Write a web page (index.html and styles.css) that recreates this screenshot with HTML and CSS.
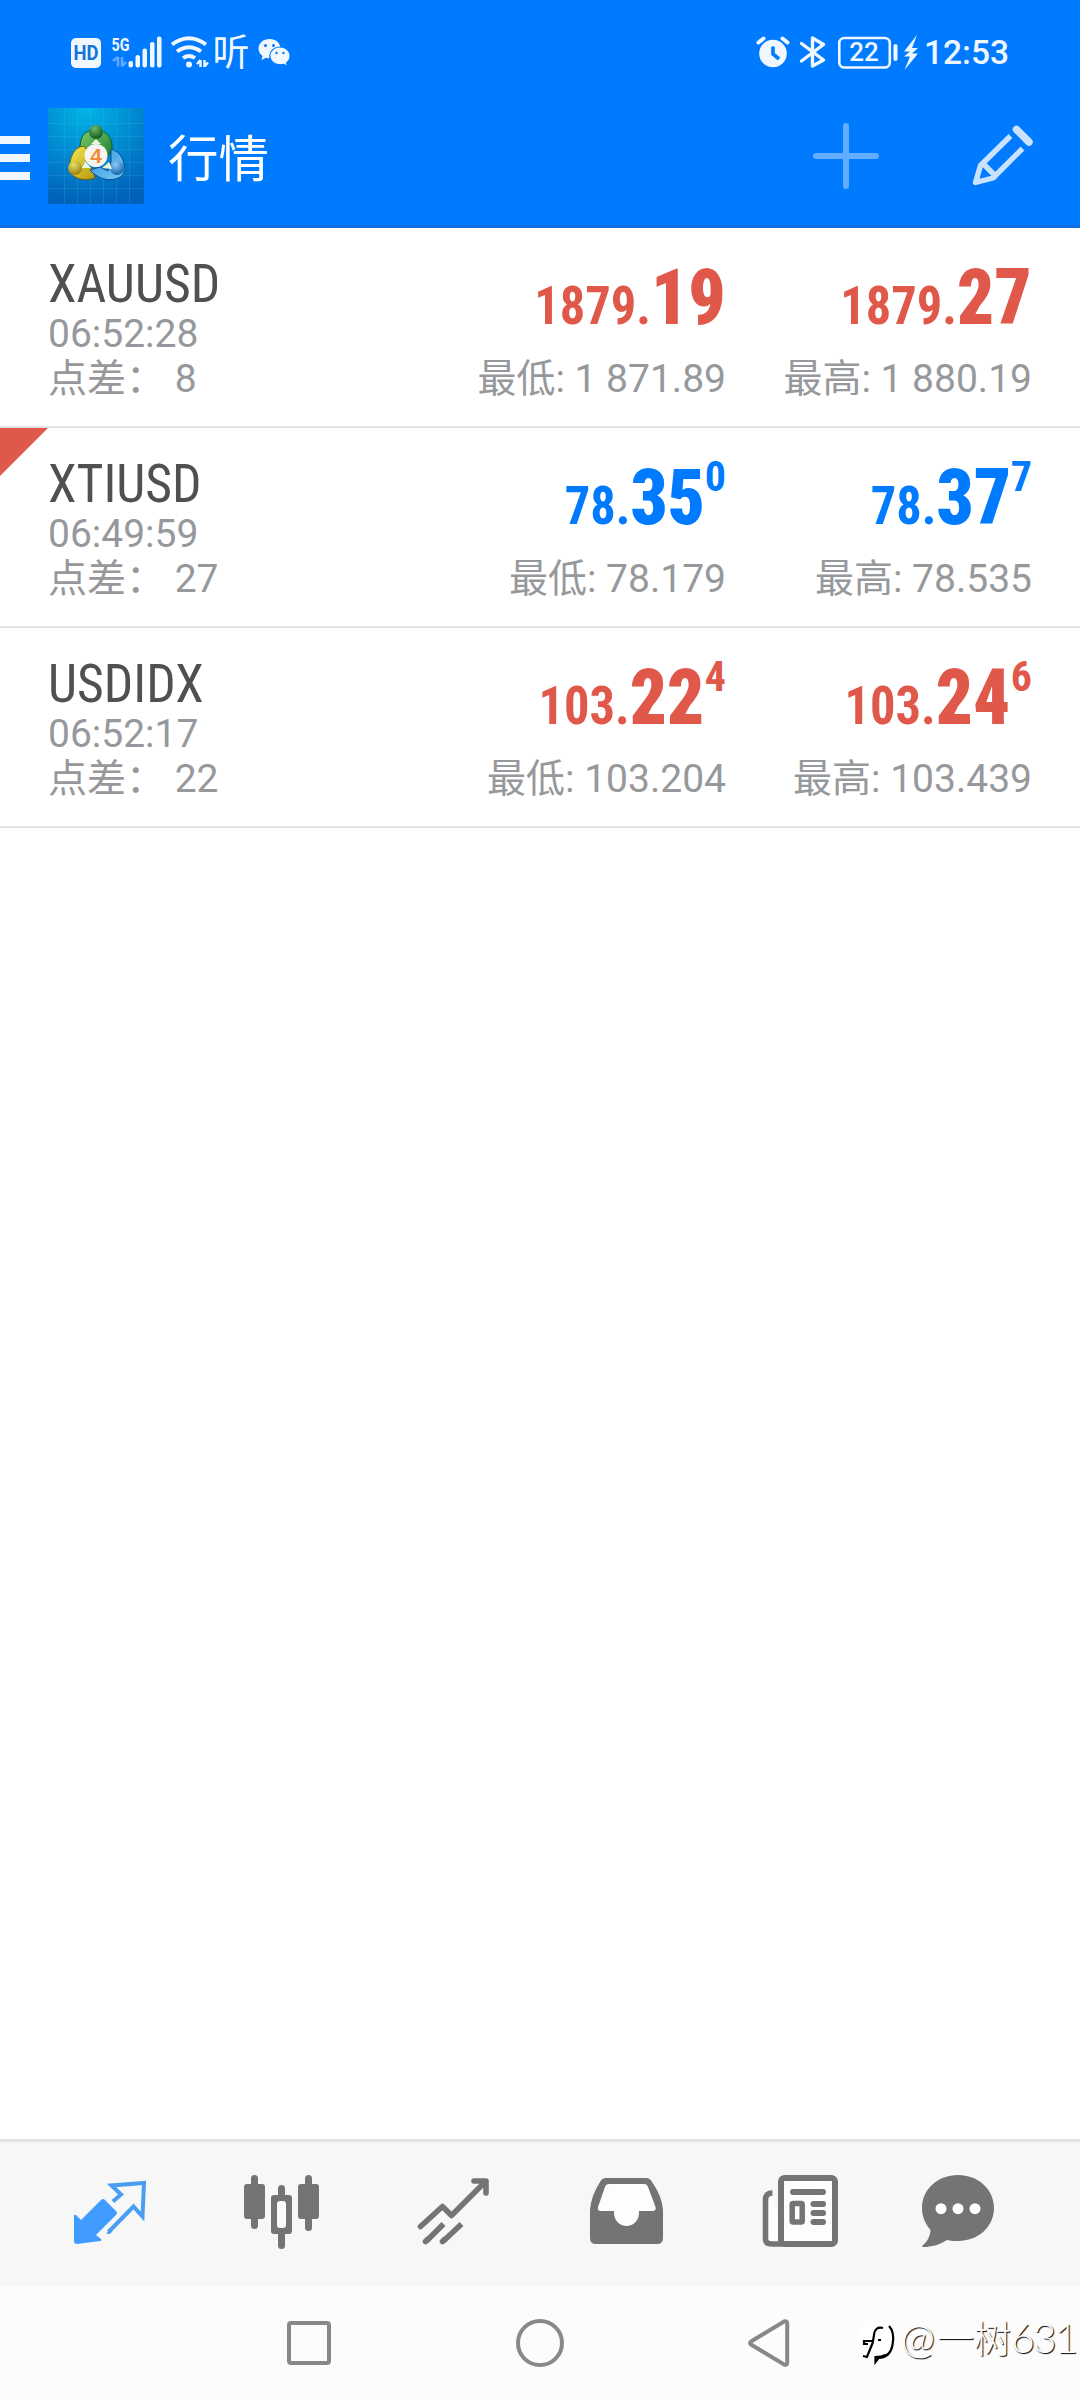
FILE: index.html
```html
<!DOCTYPE html>
<html lang="zh-CN">
<head>
<meta charset="utf-8">
<title>行情</title>
<link rel="stylesheet" href="styles.css">
</head>
<body>
<div class="screen">
  <header class="top">
    <div class="status">
      <div class="status-group">
        <svg width="36" height="76" viewBox="70 0 36 76"><rect x="71" y="38" width="30" height="30" rx="5" fill="#f0f7ff"/><text x="86" y="59.6" text-anchor="middle" textLength="25" lengthAdjust="spacingAndGlyphs" class="st-hd">HD</text></svg>
        <svg width="60" height="76" viewBox="106 0 60 76" fill="#f0f7ff"><text x="111.5" y="50.5" textLength="18" lengthAdjust="spacingAndGlyphs" class="st-5g">5G</text><path d="M118 57v9.500M113 61l5-4M122 57v9.500M122 66l4-4" stroke="#5fabff" stroke-width="2.500" fill="none"/><rect x="128.500" y="61" width="4.500" height="6.500" rx="2"/><rect x="135.500" y="55" width="4.500" height="12.500" rx="2"/><rect x="142.500" y="48.500" width="4.500" height="19" rx="2"/><rect x="150" y="42" width="4.500" height="25.500" rx="2"/><rect x="157" y="36.500" width="4.500" height="31" rx="2"/></svg>
        <svg width="46" height="76" viewBox="166 0 46 76" fill="none" stroke="#f0f7ff" stroke-width="3.800"><path d="M172 44.500Q189 32 206 44.500M177 51.500Q189 43 201 51.500M183 58Q189 54 195 58"/><circle cx="189" cy="64.500" r="3" fill="#f0f7ff" stroke="none"/><path d="M200.500 60v7M197 64l3.500-4M204.500 60v7M204.500 66.500l3.500-4" stroke-width="2.400"/></svg>
        <svg width="40" height="76" viewBox="212 0 40 76"><text x="212.500" y="65.500" class="st-cn">听</text></svg>
        <svg width="44" height="76" viewBox="252 0 44 76"><path fill="#f0f7ff" d="M269.500 39c-6.300 0-11 4.200-11 9.600 0 3.100 1.500 5.600 4 7.400l-1 4 4.500-2.300c1.300.4 2.400.5 3.600.5C276 58 280.500 54 280.500 48.600S276 39 269.500 39z"/><path fill="#f0f7ff" stroke="#007aff" stroke-width="1.200" d="M280 47c-5.800 0-10.200 4-10.200 8.800 0 5 4.400 9 10.200 9 1.200 0 2.200-.2 3.400-.5l4.100 2-1-3.400c2.200-1.700 3.600-4.200 3.600-7.100 0-4.800-4.400-8.800-10.100-8.800z"/><g fill="#007aff"><circle cx="265.500" cy="45.500" r="1.500"/><circle cx="273.500" cy="45.500" r="1.500"/><circle cx="276.500" cy="53" r="1.200"/><circle cx="283.500" cy="53" r="1.200"/></g></svg>
      </div>
      <div class="status-group">
        <svg width="43" height="76" viewBox="752 0 43 76"><circle cx="773" cy="53.500" r="13.800" fill="#f0f7ff"/><path d="M758.500 42.500l5-4M787.500 42.500l-5-4" stroke="#f0f7ff" stroke-width="4" stroke-linecap="round"/><path d="M773 46.500v7.500l6 5" fill="none" stroke="#007aff" stroke-width="3.600"/></svg>
        <svg width="39" height="76" viewBox="795 0 39 76"><path d="M801.500 43.500L823.500 60 812.500 66V38L823.500 44.500 801.500 61" fill="none" stroke="#f0f7ff" stroke-width="3.400" stroke-linejoin="round" stroke-linecap="round"/></svg>
        <svg width="66" height="76" viewBox="834 0 66 76"><rect x="839.300" y="38" width="50.500" height="29.500" rx="5" fill="none" stroke="#f0f7ff" stroke-width="2.600"/><rect x="893.500" y="44" width="4" height="17" rx="2" fill="#f0f7ff"/><text x="864" y="61" text-anchor="middle" class="st-bat">22</text></svg>
        <svg width="24" height="76" viewBox="900 0 24 76"><path d="M917 35l-13 16.500h6l-6 5h6L904.500 70 918 53.500h-6l6-5.500h-6z" fill="#f0f7ff"/></svg>
        <span class="clock">12:53</span>
      </div>
    </div>
    <div class="appbar">
      <svg width="48" height="150" viewBox="0 76 48 150" fill="#f0f7ff"><path d="M0 136h30v8H0zM0 154h30v8H0zM0 172h30v8H0z"/></svg>
      <svg class="logo" width="96" height="96" viewBox="0 0 96 96">
        <defs>
          <radialGradient id="bg" cx=".4" cy="0" r="1"><stop offset="0" stop-color="#00b4e6"/><stop offset=".5" stop-color="#008bd2"/><stop offset="1" stop-color="#0062b8"/></radialGradient>
          <linearGradient id="gr" x2="1" y2="1"><stop offset="0" stop-color="#7fce70"/><stop offset="1" stop-color="#157a28"/></linearGradient>
          <linearGradient id="ye" x2="1" y2="1"><stop offset="0" stop-color="#f3ed55"/><stop offset="1" stop-color="#b5950d"/></linearGradient>
          <linearGradient id="bl" x2="1" y2="1"><stop offset="0" stop-color="#2f94dc"/><stop offset="1" stop-color="#7cc8f5"/></linearGradient>
          <radialGradient id="hg" cx=".4" cy=".25" r=".8"><stop offset="0" stop-color="#6fb96a"/><stop offset="1" stop-color="#08551a"/></radialGradient>
          <radialGradient id="hy" cx=".4" cy=".25" r=".8"><stop offset="0" stop-color="#e9e06a"/><stop offset="1" stop-color="#937a08"/></radialGradient>
          <radialGradient id="hb" cx=".4" cy=".25" r=".8"><stop offset="0" stop-color="#8fd0f8"/><stop offset="1" stop-color="#0a5aa8"/></radialGradient>
        </defs>
        <rect width="96" height="96" fill="url(#bg)"/>
        <path d="M16.500 0v96M29.500 0v96M42.500 0v96M55.500 0v96M68.500 0v96M81.500 0v96M0 15.500h96M0 28.500h96M0 41.500h96M0 54.500h96M0 67.500h96M0 80.500h96" stroke="#6cc8f4" stroke-opacity=".16"/>
        <path d="M32 40C32 25 40 22 48 22s17 5 16 20l-7 10-9-16-12 6z" fill="url(#gr)" stroke="#0a5a24"/>
        <path d="M36 38c-11 1-14 12-15 24 3 8 14 12 26 8l-3-10-9-2 7-12z" fill="url(#ye)" stroke="#77600a"/>
        <path d="M63 41c11 3 14 13 13 23-3 9-22 12-34-2l10-3 8 4 3-9z" fill="url(#bl)" stroke="#0b4f96"/>
        <circle cx="48" cy="24" r="7" fill="url(#hg)"/><circle cx="27" cy="60" r="7" fill="url(#hy)"/><circle cx="69" cy="60" r="7" fill="url(#hb)"/>
        <path d="M43 36l5-5 5 5zM34 60l3-7 6 7zM54 60l7-6 3 7z" fill="#e8f7dc"/>
        <circle cx="48" cy="47.500" r="11.500" fill="#f6f4f1"/>
        <text x="48" y="55" text-anchor="middle" class="logo-num">4</text>
      </svg>
      <h1 class="title">行情</h1>
      <svg width="120" height="150" viewBox="786 76 120 150" stroke="#61adff" stroke-width="6" stroke-linecap="round"><path d="M846 126v60M816 156h60"/></svg>
      <svg width="174" height="150" viewBox="906 76 174 150" fill="none" stroke="#c8e2ff"><path d="M1010.500 136L980.500 165.500 975.500 182.500 993 178 1022.500 148.500M983.500 164L995 175.500" stroke-width="5.400" stroke-linejoin="round"/><path d="M976 174l7 8-8 2z" fill="#c8e2ff" stroke="none"/><path d="M1016.500 129.500L1029 142" stroke-width="7.500" stroke-linecap="round"/></svg>
    </div>
  </header>

  <main class="quotes">
    <section class="quote down">
      <div class="sym"><div class="name">XAUUSD</div><div class="time">06:52:28</div><div class="sub">点差： 8</div></div>
      <div class="side"><div class="price"><span class="main">1879.<b>19</b></span></div><div class="sub">最低: 1 871.89</div></div>
      <div class="side"><div class="price"><span class="main">1879.<b>27</b></span></div><div class="sub">最高: 1 880.19</div></div>
    </section>
    <section class="quote up flagged">
      <div class="sym"><div class="name">XTIUSD</div><div class="time">06:49:59</div><div class="sub">点差： 27</div></div>
      <div class="side"><div class="price"><span class="main">78.<b>35</b></span><i>0</i></div><div class="sub">最低: 78.179</div></div>
      <div class="side"><div class="price"><span class="main">78.<b>37</b></span><i>7</i></div><div class="sub">最高: 78.535</div></div>
    </section>
    <section class="quote down">
      <div class="sym"><div class="name">USDIDX</div><div class="time">06:52:17</div><div class="sub">点差： 22</div></div>
      <div class="side"><div class="price"><span class="main">103.<b>22</b></span><i>4</i></div><div class="sub">最低: 103.204</div></div>
      <div class="side"><div class="price"><span class="main">103.<b>24</b></span><i>6</i></div><div class="sub">最高: 103.439</div></div>
    </section>
  </main>

  <nav class="tabs">
    <svg viewBox="24 2142 172 144"><path d="M101 2200q2-2 4 0l11 11q2 2 0 4l-20 20 5 4q1 2-1 2l-23 3q-3 0-3-3v-25q0-2 2-1l5 5z" fill="#419cff"/><path d="M113 2201.500l8-7-9.500-9 32.500-2.500-1.500 33.500-9-10-25 25.500" fill="none" stroke="#4a9ef2" stroke-width="4"/><path d="M106 2233.500l4-4 2.500 2-3 2.500z" fill="#4a9ef2"/></svg>
    <svg viewBox="196 2142 172 144" fill="#747474"><rect x="251" y="2175" width="7" height="54" rx="3.500"/><rect x="244" y="2184" width="21" height="35" rx="3"/><rect x="305" y="2175" width="7" height="56" rx="3.500"/><rect x="298" y="2184" width="21" height="35" rx="3"/><rect x="278" y="2185" width="7" height="64" rx="3.500"/><rect x="271" y="2195" width="21" height="39" rx="3"/><rect x="277" y="2201" width="9" height="27" rx="3" fill="#fbfbfb"/></svg>
    <svg viewBox="368 2142 172 144" fill="none" stroke="#747474" stroke-width="5.600" stroke-linecap="round" stroke-linejoin="round"><path d="M420.500 2226.500l22-20 9 9 33.500-33.500M474 2181h12v12"/><path stroke-linecap="butt" d="M426.500 2241l17-17M443.500 2241l18-17"/><path d="M425.500 2241.500l2-2M442.500 2241.500l2-2"/></svg>
    <svg viewBox="540 2142 172 144"><path d="M606 2178h40q4 0 6 4 10 14 11 28v28q0 6-6 6h-61q-6 0-6-6v-28q1-14 10-28 2-4 6-4z" fill="#747474"/><path d="M609 2184h35q3 0 4 3l7.500 20q1 4-3 4H639v2a12.500 13 0 0 1-25 0v-2h-13q-4 0-3-4l7-20q1-3 4-3z" fill="#fdfdfd"/></svg>
    <svg viewBox="712 2142 172 144" fill="none" stroke="#747474" stroke-width="6"><path d="M772.500 2193q-7 0-7 7v39q0 5 6 5h12" fill="#fdfdfd" stroke-width="5.600"/><rect x="781" y="2178" width="54" height="66" rx="3.500" fill="#fdfdfd"/><path d="M793 2192h30M813.500 2204h9.500M813.500 2213h9.500M813.500 2222h9.500" stroke-linecap="round"/><rect x="792.200" y="2203.500" width="10" height="18.500" rx="1" stroke-width="5.500"/></svg>
    <svg viewBox="884 2142 172 144"><path d="M958 2175c20 0 36 14 36 33s-16 33-36 33c-4 0-7 0-11-1-8 5-16 7-23 7q-3 0-1-2c5-4 7-9 7.500-15-5-6-8.500-13-8.500-22 0-19 16-33 36-33z" fill="#747474"/><g fill="#fff"><circle cx="941" cy="2208.700" r="5.500"/><circle cx="958" cy="2208.700" r="5.500"/><circle cx="975" cy="2208.700" r="5.500"/></g></svg>
  </nav>
  <div class="sysnav">
    <svg viewBox="193 2286 231 114"><rect x="289" y="2323" width="40" height="40" rx="2"/></svg>
    <svg viewBox="424 2286 231 114"><circle cx="540" cy="2343" r="22"/></svg>
    <svg viewBox="655 2286 231 114"><path d="M751 2341.500L784 2321.500q3.200-1 3.200 2v39q0 3-3.200 2L751 2344.500q-2-1.500 0-3z"/></svg>
    <div class="mark">
      <svg width="47" height="54" viewBox="855 2316 47 54"><rect x="857" y="2321" width="35" height="39" rx="14" fill="#fff"/><path d="M883 2328q-8-2-9 7l-1 6h-9v3h4M873 2342l-6 15-4-1M878 2340h3M889 2326q6 6 3.500 19-2 12-14 13l-3 4v-5q6 0 10-2" fill="none" stroke="#000" stroke-width="2.200"/></svg>
      <span class="mark-text at">@</span><span class="mark-text cn">一树</span><span class="mark-text num">631</span>
    </div>
  </div>
</div>
</body>
</html>
```
FILE: styles.css
```css
* { box-sizing: border-box; }
body { margin: 0; background: #fff; font-family: Roboto, "Noto Sans CJK SC", sans-serif; }
svg { display: block; flex: none; }
.screen { width: 1080px; height: 2400px; display: flex; flex-direction: column; overflow: hidden; }

.top { height: 228px; background: #007aff; border-bottom: 3px solid #0d6edb; }
.status { height: 76px; display: flex; justify-content: space-between; padding: 0 70px; }
.status-group { display: flex; }
.clock { width: 86px; padding-top: 33px; font-size: 33.500px; line-height: 40px; font-weight: 500; color: #f0f7ff; white-space: nowrap; }
.st-hd { font: 700 20px Roboto, sans-serif; fill: #1473dc; }
.st-5g { font: 700 19px Roboto, sans-serif; }
.st-cn { font: 400 37px "Noto Sans CJK SC", sans-serif; fill: #f0f7ff; }
.st-bat { font: 500 26px Roboto, sans-serif; fill: #f0f7ff; }
.appbar { height: 149px; display: flex; }
.logo { margin-top: 32px; }
.logo-num { font: 700 21px "Liberation Sans", sans-serif; fill: #f58b36; }
.title { margin: 0; padding: 50px 0 0 24px; width: 642px; font-size: 50.500px; line-height: 68px; font-weight: 400; color: #fff; }

.quotes { flex: 1; }
.quote { position: relative; height: 200px; display: flex; padding: 0 48px; border-bottom: 2px solid #e3e3e3; }
.flagged::before { content: ""; position: absolute; left: 0; top: 0; width: 48px; height: 48px; background: #df584a; clip-path: polygon(0 0, 100% 0, 0 100%); }
.sym { width: 372px; padding-top: 24px; }
.side { width: 306px; padding-top: 22px; text-align: right; white-space: nowrap; }
.name { font-family: "Roboto Condensed", Roboto, sans-serif; font-stretch: 75%; font-size: 54px; line-height: 64px; height: 61px; color: #505050; transform: scaleX(.957); transform-origin: left; }
.time, .sub { font-size: 39px; color: #96989b; }
.time { line-height: 42px; height: 43px; }
.sub { line-height: 46px; height: 46px; }
.price { height: 106px; line-height: 96px; font-family: "Roboto Condensed", Roboto, sans-serif; font-stretch: 75%; font-size: 54px; font-weight: 700; }
.price .main { display: inline-block; transform: scaleX(.935); transform-origin: right; }
.price b { font-size: 78px; }
.price i { font-size: 42px; font-style: normal; position: relative; top: -33px; }
.down .price { color: #df584a; }
.up .price { color: #007aff; }

.tabs { height: 147px; display: flex; padding-left: 24px; background: #f7f7f7; border-top: 3px solid #e3e3e3; }
.tabs svg { width: 172px; height: 144px; }
.sysnav { position: relative; height: 114px; display: flex; padding-left: 193px; background: #fcfcfc; }
.sysnav > svg { width: 231px; height: 114px; fill: none; stroke: #888; stroke-width: 4; }
.mark { position: absolute; left: 855px; top: 30px; display: flex; align-items: baseline; }
.mark > svg { align-self: flex-start; }
.mark-text { line-height: 42px; color: #fff; text-shadow: 1px 1px 1px #000; white-space: nowrap; }
.mark-text.cn { width: 74px; font-family: "Noto Sans CJK SC", sans-serif; font-size: 37px; font-weight: 300; }
.mark-text.at { width: 36px; font-family: Lato, sans-serif; font-size: 41px; font-weight: 300; margin-left: -1px; }
.mark-text.num { width: 68px; font-family: Lato, sans-serif; font-size: 41px; font-weight: 300; letter-spacing: -2px; }
```
